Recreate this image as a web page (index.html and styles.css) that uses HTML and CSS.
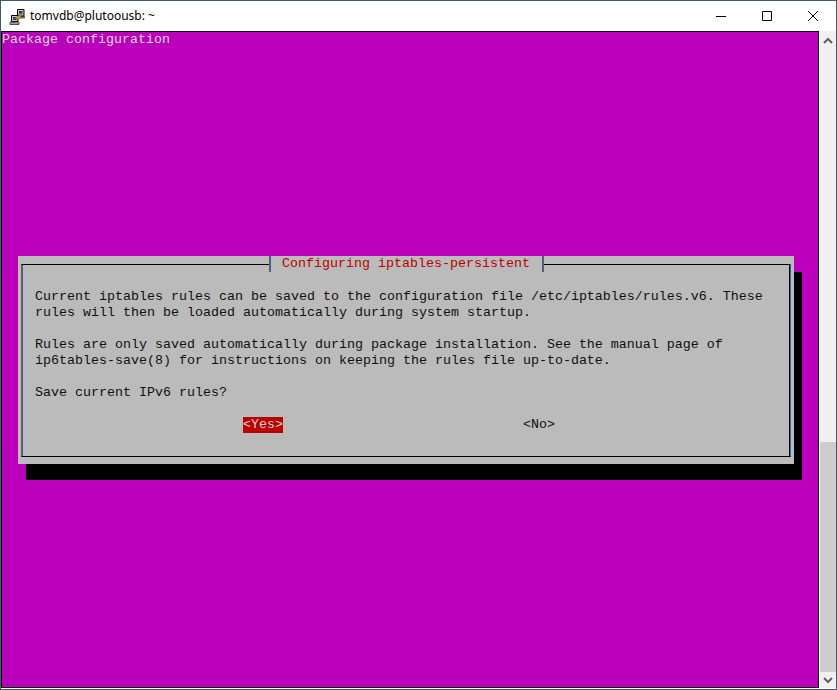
FILE: index.html
```html
<!DOCTYPE html>
<html lang="en">
<head>
<meta charset="utf-8">
<title>tomvdb@plutoousb: ~</title>
<link rel="stylesheet" href="styles.css">
</head>
<body>
<div class="window">
  <header class="titlebar">
    <svg class="app-icon" width="16" height="16" viewBox="0 0 16 16">
      <path d="M8.5 0.5h6.5v6.5h-6.5z" fill="#c8c8c8" stroke="#000"/>
      <path d="M10 2h3.5v3.5h-3.5z" fill="#2030b0"/>
      <path d="M9 7.5h6.5v1.5h-6.5z" fill="#a0a0a0" stroke="#000" stroke-width=".6"/>
      <path d="M2.5 6.5h6.5v6h-6.5z" fill="#c8c8c8" stroke="#000"/>
      <path d="M4 8h3.5v3h-3.5z" fill="#2030b0"/>
      <path d="M1 13h9v2.5h-9z" fill="#a0a0a0" stroke="#303030" stroke-width=".8"/>
      <path d="M14 3l-4.500 2.500 1.500 1-6.500 3.500 4-1-1 2 5-4.500-2-.5z" fill="#f8e020" stroke="#806000" stroke-width=".5"/>
    </svg>
    <span class="window-title">tomvdb@plutoousb: ~</span>
    <div class="controls">
      <span class="control">
        <svg width="12" height="12" viewBox="0 0 12 12"><path d="M1 6.500h10" stroke="#000"/></svg>
      </span>
      <span class="control">
        <svg width="12" height="12" viewBox="0 0 12 12"><path d="M1.500 1.500h9v9h-9z" fill="none" stroke="#000"/></svg>
      </span>
      <span class="control">
        <svg width="12" height="12" viewBox="0 0 12 12"><path d="M1 1l10 10M11 1l-10 10" stroke="#000" fill="none"/></svg>
      </span>
    </div>
  </header>
  <div class="content">
    <main class="terminal">
      <div class="backtitle">Package configuration</div>
      <section class="dialog">
        <div class="frame">
          <h1 class="dialog-title">Configuring iptables-persistent</h1>
          <pre class="message">Current iptables rules can be saved to the configuration file /etc/iptables/rules.v6. These
rules will then be loaded automatically during system startup.

Rules are only saved automatically during package installation. See the manual page of
ip6tables-save(8) for instructions on keeping the rules file up-to-date.

Save current IPv6 rules?
</pre>
          <div class="buttons">
            <span class="button selected">&lt;Yes&gt;</span>
            <span class="button">&lt;No&gt;</span>
          </div>
        </div>
      </section>
    </main>
    <aside class="scrollbar">
      <svg class="arrow" width="16" height="17" viewBox="0 0 16 17"><path d="M4 12l4-4 4 4" fill="none" stroke="#606060" stroke-width="2"/></svg>
      <div class="track"><div class="thumb"></div></div>
      <svg class="arrow" width="16" height="17" viewBox="0 0 16 17"><path d="M4 6l4 4 4-4" fill="none" stroke="#606060" stroke-width="2"/></svg>
    </aside>
  </div>
</div>
</body>
</html>
```

FILE: styles.css
```css
* { box-sizing: border-box; }
html, body { margin: 0; padding: 0; }
.window {
  width: 837px;
  height: 690px;
  border: 1px solid #3f5a6b;
  background: #fff;
  display: flex;
  flex-direction: column;
  overflow: hidden;
}
.titlebar {
  height: 30px;
  display: flex;
  align-items: center;
  padding-left: 8px;
  background: #fff;
  flex: none;
}
.app-icon { flex: none; margin-top: 1px; }
.window-title {
  margin-left: 5px;
  font: 12px/16px "Noto Sans", sans-serif;
  color: #000;
  margin-top: 0;
}
.controls { margin-left: auto; display: flex; }
.control {
  width: 46px;
  height: 29px;
  display: flex;
  align-items: center;
  justify-content: center;
}
.content { flex: 1; display: flex; padding-bottom: 1px; min-height: 0; }
.terminal {
  width: 818px;
  height: 657px;
  border: 1px solid #000;
  background: #bb00bb;
  font: 13.333px/16px "Liberation Mono", monospace;
  flex: none;
}
.backtitle { color: #d8d8d8; height: 16px; }
.dialog {
  margin: 208px 0 0 16px;
  width: 776px;
  height: 208px;
  padding: 8px 3px 7px 3px;
  background: #bbbbbb;
  box-shadow: 8px 16px 0 #000;
}
.frame {
  position: relative;
  height: 193px;
  padding: 24px 0 0 13px;
  border-top: 1px solid #000;
  border-bottom: 1px solid #000;
  border-left: 1px solid #7a5a30;
  border-right: 1px solid #1f6fc0;
  box-shadow: inset 1px 0 0 #2a66a8, inset -1px 0 0 #000;
}
.dialog-title {
  position: absolute;
  top: -9px;
  left: 248px;
  width: 273px;
  height: 16px;
  margin: 0;
  padding-left: 11px;
  font: inherit;
  color: #bb0000;
  background: #bbbbbb;
  border-left: 1px solid #2a66a8;
  border-right: 1px solid #2a66a8;
  box-shadow: -1px 0 0 #7a5a30, 1px 0 0 #7a5a30;
}
.message { margin: 0; font: inherit; color: #101010; height: 128px; }
.buttons { display: flex; height: 16px; padding-left: 208px; }
.button { color: #101010; }
.button.selected { background: #bb0000; color: #d8d8d8; margin-right: 240px; }
.scrollbar {
  width: 16px;
  margin-left: 1px;
  height: 657px;
  background: #f0f0f0;
  display: flex;
  flex-direction: column;
  flex: none;
}
.arrow { flex: none; display: block; }
.track { flex: 1; padding-top: 394px; }
.thumb { height: 230px; background: #cdcdcd; }
```
